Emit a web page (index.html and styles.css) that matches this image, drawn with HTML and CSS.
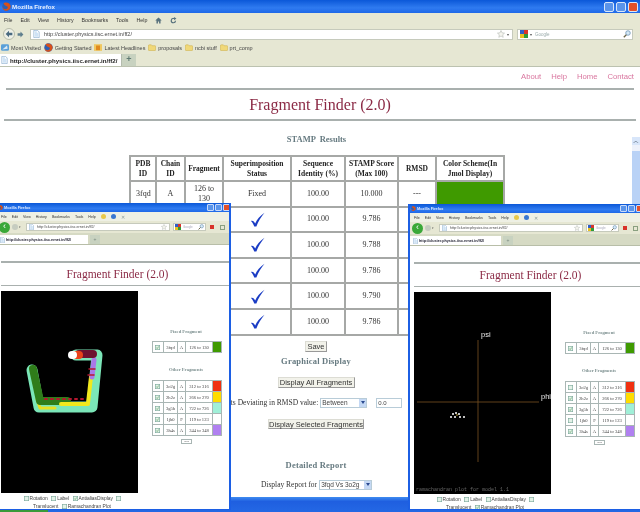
FILE: index.html
```html
<!DOCTYPE html>
<html lang="en">
<head>
<meta charset="utf-8">
<title>Fragment Finder (2.0)</title>
<link rel="stylesheet" href="styles.css">
</head>
<body>
<svg class="defs" width="0" height="0" aria-hidden="true">
  <defs>
    <symbol id="fox" viewBox="0 0 12 12">
      <circle cx="6" cy="6" r="5.6" fill="#2f5fb0"/>
      <path d="M2 1.5C4 .2 9 .2 11 4c1.300 3.500-.8 7.500-5 7.800C2.500 12 .2 9 .4 6c.6 2 2 3.500 4 3.500 2.500 0 3.500-1.500 3.300-3C6.500 5.500 4.500 5 3.500 4 3 3 2.600 2.400 2 1.500z" fill="#d8501a"/>
    </symbol>
    <symbol id="page" viewBox="0 0 10 12">
      <path d="M1 .5h5.500L9 3v8.500H1z" fill="#fff" stroke="#7fa6cc"/>
      <path d="M2.500 2h3v2h2v6h-5z" fill="#cfe3f5"/>
    </symbol>
    <symbol id="folder" viewBox="0 0 12 10">
      <path d="M.5 2.500Q.5 1 2 1h3l1 1.300h4.500Q11.500 2.300 11.500 3.500v5Q11.500 9.500 10.500 9.500h-9Q.5 9.500 .5 8.500z" fill="#f0d878" stroke="#c9a93e" stroke-width=".7"/>
    </symbol>
    <symbol id="gmark" viewBox="0 0 12 12">
      <rect x="0" y="0" width="6" height="6" fill="#2f5fc8"/>
      <rect x="6" y="0" width="6" height="6" fill="#d8352a"/>
      <rect x="0" y="6" width="6" height="6" fill="#e8c020"/>
      <rect x="6" y="6" width="6" height="6" fill="#2f9a3a"/>
    </symbol>
    <symbol id="star" viewBox="0 0 12 12">
      <path d="M6 .8l1.600 3.500 3.700.4-2.800 2.500.8 3.800L6 9l-3.300 2 .8-3.800L.7 4.700l3.700-.4z" fill="#f6f6f0" stroke="#b4b8b4" stroke-width=".9"/>
    </symbol>
    <symbol id="lens" viewBox="0 0 12 12">
      <circle cx="7.500" cy="4.500" r="3.400" fill="#d5e8f5" stroke="#6d94b5" stroke-width="1.200"/>
      <path d="M5 7L1.200 10.800" stroke="#6b6548" stroke-width="2"/>
    </symbol>
    <symbol id="home" viewBox="0 0 12 12">
      <path d="M6 1L.5 6H2.500v5h2.500V7.500h2V11h2.500V6h2z" fill="#56707c"/>
    </symbol>
    <symbol id="reload" viewBox="0 0 12 12">
      <path d="M9.500 6.500A3.700 3.700 0 1 1 6 2.500h1.500" fill="none" stroke="#56707c" stroke-width="2"/>
      <path d="M7 0l4 2.700L7 5.400z" fill="#56707c"/>
    </symbol>
    <symbol id="check" viewBox="0 0 16 16">
      <path d="M1 9.500C3 8.800 4.500 10 5.500 12.300 7.500 8 10.500 4 15.500 .8 11.800 5.500 8.800 10 6.800 15.500H4.500C3.800 13 2.500 10.800 1 9.500z" fill="#1a3cc4"/>
    </symbol>
    <symbol id="box" viewBox="0 0 8 8">
      <rect x=".5" y=".5" width="7" height="7" fill="#e4f2e8" stroke="#7aa89a"/>
    </symbol>
    <symbol id="tick" viewBox="0 0 8 8">
      <rect x=".5" y=".5" width="7" height="7" fill="#e4f2e8" stroke="#7aa89a"/>
      <path d="M2 4l1.500 1.700L6 2.300" fill="none" stroke="#4f9a58"/>
    </symbol>
  </defs>
</svg>

<div class="desktop">
  <div class="taskbar"><span class="start"></span></div>

  <section class="win win-main">
    <header class="titlebar">
      <svg class="tb-fox"><use href="#fox"/></svg>
      <span class="tb-text">Mozilla Firefox</span>
      <span class="tb-btns"><i class="btn-blue"></i><i class="btn-blue"></i><i class="btn-red"></i></span>
    </header>
    <nav class="menubar">
      <span>File</span><span>Edit</span><span>View</span><span>History</span><span>Bookmarks</span><span>Tools</span><span>Help</span>
      <svg class="ico-home"><use href="#home"/></svg><svg class="ico-home"><use href="#reload"/></svg>
    </nav>
    <div class="navbar">
      <span class="back"><svg viewBox="0 0 12 12"><path d="M1 6l5-5v3h5v4H6v3z" fill="#4a6a80"/></svg></span>
      <svg class="fwd" viewBox="0 0 12 12"><path d="M11 6L6 1v3H1v4h5v3z" fill="#5f7f8e"/></svg>
      <div class="url">
        <svg class="page"><use href="#page"/></svg>
        <span class="url-text">http://cluster.physics.iisc.ernet.in/ff2/</span>
        <svg class="url-star"><use href="#star"/></svg><span class="caret">▾</span>
      </div>
      <div class="search">
        <svg class="gmark"><use href="#gmark"/></svg><span class="caret">▾</span>
        <span class="search-text">Google</span>
        <svg class="lens"><use href="#lens"/></svg>
      </div>
    </div>
    <div class="bookmarks">
      <span class="bm"><svg class="bm-ico" viewBox="0 0 12 10"><rect width="12" height="10" rx="2" fill="#5aa0d8"/><path d="M2 8l7-6 1 5z" fill="#dbe9f4"/></svg>Most Visited</span>
      <span class="bm"><svg class="bm-fox"><use href="#fox"/></svg>Getting Started</span>
      <span class="bm"><svg class="bm-ico" viewBox="0 0 12 10"><rect width="12" height="10" fill="#f0c860"/><rect x="3" y="2" width="6" height="7" fill="#e08a20"/></svg>Latest Headlines</span>
      <span class="bm"><svg class="bm-ico"><use href="#folder"/></svg>proposals</span>
      <span class="bm"><svg class="bm-ico"><use href="#folder"/></svg>ncbi stuff</span>
      <span class="bm"><svg class="bm-ico"><use href="#folder"/></svg>prt_comp</span>
    </div>
    <div class="tabs">
      <div class="tab"><svg class="page"><use href="#page"/></svg><b>http://cluster.physics.iisc.ernet.in/ff2/</b></div>
      <div class="newtab">+</div>
    </div>

    <main class="page-body">
      <div class="links"><a>About</a><a>Help</a><a>Home</a><a>Contact</a></div>
      <hr class="rule rule-a">
      <h1 class="title">Fragment Finder (2.0)</h1>
      <hr class="rule rule-b">
      <h2 class="stamp">STAMP &nbsp;Results</h2>
      <table class="results">
        <tr>
          <th>PDB ID</th><th>Chain ID</th><th>Fragment</th><th>Superimposition Status</th><th>Sequence Identity (%)</th><th>STAMP Score (Max 100)</th><th>RMSD</th><th>Color Scheme(In Jmol Display)</th>
        </tr>
        <tr><td>3fqd</td><td>A</td><td>126 to 130</td><td>Fixed</td><td>100.00</td><td>10.000</td><td>---</td><td class="c-green"></td></tr>
        <tr><td>3o2g</td><td>A</td><td>312 to 316</td><td><svg class="check"><use href="#check"/></svg></td><td>100.00</td><td>9.786</td><td>0.10</td><td class="c-red"></td></tr>
        <tr><td>2h2z</td><td>A</td><td>266 to 270</td><td><svg class="check"><use href="#check"/></svg></td><td>100.00</td><td>9.788</td><td>0.10</td><td class="c-yellow"></td></tr>
        <tr><td>3g5h</td><td>A</td><td>722 to 726</td><td><svg class="check"><use href="#check"/></svg></td><td>100.00</td><td>9.786</td><td>0.10</td><td class="c-aqua"></td></tr>
        <tr><td>1jb0</td><td>F</td><td>119 to 123</td><td><svg class="check"><use href="#check"/></svg></td><td>100.00</td><td>9.790</td><td>0.10</td><td></td></tr>
        <tr><td>3h4s</td><td>A</td><td>344 to 348</td><td><svg class="check"><use href="#check"/></svg></td><td>100.00</td><td>9.786</td><td>0.10</td><td class="c-violet"></td></tr>
      </table>
      <div class="form">
        <button class="fbtn btn-save">Save</button>
        <h3 class="sub sub-graph">Graphical Display</h3>
        <button class="fbtn btn-all">Display All Fragments</button>
        <div class="rmsd-row">
          <span>Display Fragments Deviating in RMSD value:</span>
          <span class="sel sel-between">Between<i class="sel-arrow"></i></span>
          <span class="inp">0.0</span>
          <span class="and">and</span>
          <span class="inp inp-end"></span>
        </div>
        <button class="fbtn btn-sel">Display Selected Fragments</button>
        <h3 class="sub sub-report">Detailed Report</h3>
        <div class="report-row">
          <span>Display Report for</span>
          <span class="sel sel-report">3fqd Vs 3o2g<i class="sel-arrow"></i></span>
        </div>
      </div>
    </main>
    <div class="scrollbar"><span class="sb-up">︿</span><span class="sb-thumb"></span></div>
  </section>

  <section class="win win-mini win-left">
    <header class="m-title">
      <svg class="m-fox"><use href="#fox"/></svg><span>Mozilla Firefox</span>
      <span class="m-btns"><i class="btn-blue"></i><i class="btn-blue"></i><i class="btn-red"></i></span>
    </header>
    <nav class="m-menu">
      <span>File</span><span>Edit</span><span>View</span><span>History</span><span>Bookmarks</span><span>Tools</span><span>Help</span>
      <i class="dot dot-y"></i><i class="dot dot-b"></i><i class="m-x">✕</i>
    </nav>
    <div class="m-nav">
      <span class="m-back">‹</span><span class="m-fwd"></span><span class="caret">▾</span>
      <div class="m-url"><svg class="m-page"><use href="#page"/></svg><span>http://cluster.physics.iisc.ernet.in/ff2/</span><svg class="m-star"><use href="#star"/></svg></div>
      <div class="m-search"><svg class="m-g"><use href="#gmark"/></svg><span>Google</span><svg class="m-lens"><use href="#lens"/></svg></div>
      <i class="m-red"></i><i class="m-sq"></i>
    </div>
    <div class="m-tabs"><div class="m-tab"><svg class="m-page"><use href="#page"/></svg><b>http://cluster.physics.iisc.ernet.in/ff2/</b></div><div class="m-new">+</div></div>
    <div class="m-body">
      <hr class="m-rule">
      <h2 class="m-h">Fragment Finder (2.0)</h2>
      <hr class="m-rule">
      <div class="m-main">
        <div class="m-left">
          <svg class="viewer" viewBox="0 0 137 202">
            <rect width="137" height="202" fill="#000"/>
            <g fill="none" stroke-linecap="round" stroke-linejoin="round">
              <path d="M31 79L38 116H91L96 64H75" stroke="#7be6b8" stroke-width="11"/>
              <path d="M36 108L39 117H54" stroke="#e8e020" stroke-width="3"/>
              <path d="M32 78L39 110H66" stroke="#2f7d1a" stroke-width="8"/>
              <path d="M60 113H87" stroke="#f2e81c" stroke-width="4"/>
              <path d="M44 108H84" stroke="#b5172f" stroke-width="2" stroke-dasharray="2 4"/>
              <path d="M87 112L90 86" stroke="#f2e81c" stroke-width="4"/>
              <path d="M91 86L93 69" stroke="#a979e8" stroke-width="5"/>
              <path d="M87 84L93 84M88 78L94 78" stroke="#b5172f" stroke-width="1.500"/>
              <path d="M78 63H92" stroke="#6d1230" stroke-width="8"/>
              <path d="M74 64H78" stroke="#e8431a" stroke-width="8"/>
              <path d="M71 64H72" stroke="#fff" stroke-width="8"/>
            </g>
          </svg>
          <div class="opts">
            <label><svg class="cb"><use href="#box"/></svg>Rotation</label>
            <label><svg class="cb"><use href="#box"/></svg>Label</label>
            <label><svg class="cb"><use href="#tick"/></svg>AntialiasDisplay</label>
            <label><svg class="cb"><use href="#box"/></svg>Translucent</label>
            <label><svg class="cb"><use href="#box"/></svg>Ramachandran Plot</label>
          </div>
        </div>
        <aside class="m-side">
          <div class="m-cap cap-fixed">Fixed Fragment</div>
          <table class="frag">
            <tr><td><svg class="cb"><use href="#tick"/></svg></td><td>3fqd</td><td>A</td><td>126 to 130</td><td class="c-green"></td></tr>
          </table>
          <div class="m-cap cap-other">Other Fragments</div>
          <table class="frag">
            <tr><td><svg class="cb"><use href="#tick"/></svg></td><td>3o2g</td><td>A</td><td>312 to 316</td><td class="c-red"></td></tr>
            <tr><td><svg class="cb"><use href="#tick"/></svg></td><td>2h2z</td><td>A</td><td>266 to 270</td><td class="c-yellow"></td></tr>
            <tr><td><svg class="cb"><use href="#tick"/></svg></td><td>3g5h</td><td>A</td><td>722 to 726</td><td class="c-aqua"></td></tr>
            <tr><td><svg class="cb"><use href="#tick"/></svg></td><td>1jb0</td><td>F</td><td>119 to 123</td><td></td></tr>
            <tr><td><svg class="cb"><use href="#tick"/></svg></td><td>3h4s</td><td>A</td><td>344 to 348</td><td class="c-violet"></td></tr>
          </table>
          <span class="m-back-btn">Back</span>
        </aside>
      </div>
    </div>
  </section>

  <section class="win win-mini win-right">
    <header class="m-title">
      <svg class="m-fox"><use href="#fox"/></svg><span>Mozilla Firefox</span>
      <span class="m-btns"><i class="btn-blue"></i><i class="btn-blue"></i><i class="btn-red"></i></span>
    </header>
    <nav class="m-menu">
      <span>File</span><span>Edit</span><span>View</span><span>History</span><span>Bookmarks</span><span>Tools</span><span>Help</span>
      <i class="dot dot-y"></i><i class="dot dot-b"></i><i class="m-x">✕</i>
    </nav>
    <div class="m-nav">
      <span class="m-back">‹</span><span class="m-fwd"></span><span class="caret">▾</span>
      <div class="m-url"><svg class="m-page"><use href="#page"/></svg><span>http://cluster.physics.iisc.ernet.in/ff2/</span><svg class="m-star"><use href="#star"/></svg></div>
      <div class="m-search"><svg class="m-g"><use href="#gmark"/></svg><span>Google</span><svg class="m-lens"><use href="#lens"/></svg></div>
      <i class="m-red"></i><i class="m-sq"></i>
    </div>
    <div class="m-tabs"><div class="m-tab"><svg class="m-page"><use href="#page"/></svg><b>http://cluster.physics.iisc.ernet.in/ff2/</b></div><div class="m-new">+</div></div>
    <div class="m-body">
      <hr class="m-rule">
      <h2 class="m-h">Fragment Finder (2.0)</h2>
      <hr class="m-rule">
      <div class="m-main">
        <div class="m-left">
          <svg class="viewer" viewBox="0 0 137 202">
            <rect width="137" height="202" fill="#000"/>
            <path d="M64 48V170M3 110H125" stroke="#7a5222" stroke-width=".8" fill="none"/>
            <text class="plot-label" x="67" y="45">psi</text>
            <text class="plot-label" x="127" y="107">phi</text>
            <g fill="#fff"><circle cx="39" cy="122" r="1"/><circle cx="42" cy="121" r="1"/><circle cx="45" cy="122" r="1"/><circle cx="41" cy="125" r="1"/><circle cx="46" cy="125" r="1"/><circle cx="50" cy="125" r="1"/><circle cx="37" cy="125" r="1"/></g>
            <circle cx="43" cy="123" r=".8" fill="#e0c040"/>
            <text class="plot-note" x="2" y="199">ramachandran plot for model 1.1</text>
          </svg>
          <div class="opts">
            <label><svg class="cb"><use href="#box"/></svg>Rotation</label>
            <label><svg class="cb"><use href="#box"/></svg>Label</label>
            <label><svg class="cb"><use href="#box"/></svg>AntialiasDisplay</label>
            <label><svg class="cb"><use href="#box"/></svg>Translucent</label>
            <label><svg class="cb"><use href="#tick"/></svg>Ramachandran Plot</label>
          </div>
        </div>
        <aside class="m-side">
          <div class="m-cap cap-fixed">Fixed Fragment</div>
          <table class="frag">
            <tr><td><svg class="cb"><use href="#tick"/></svg></td><td>3fqd</td><td>A</td><td>126 to 130</td><td class="c-green"></td></tr>
          </table>
          <div class="m-cap cap-other">Other Fragments</div>
          <table class="frag">
            <tr><td><svg class="cb"><use href="#box"/></svg></td><td>3o2g</td><td>A</td><td>312 to 316</td><td class="c-red"></td></tr>
            <tr><td><svg class="cb"><use href="#tick"/></svg></td><td>2h2z</td><td>A</td><td>266 to 270</td><td class="c-yellow"></td></tr>
            <tr><td><svg class="cb"><use href="#tick"/></svg></td><td>3g5h</td><td>A</td><td>722 to 726</td><td class="c-aqua"></td></tr>
            <tr><td><svg class="cb"><use href="#box"/></svg></td><td>1jb0</td><td>F</td><td>119 to 123</td><td></td></tr>
            <tr><td><svg class="cb"><use href="#tick"/></svg></td><td>3h4s</td><td>A</td><td>344 to 348</td><td class="c-violet"></td></tr>
          </table>
          <span class="m-back-btn">Back</span>
        </aside>
      </div>
    </div>
  </section>
</div>
</body>
</html>
```

FILE: styles.css
```css
* { box-sizing: border-box; }
html, body { margin: 0; padding: 0; background: #fff; }
body { width: 640px; height: 512px; overflow: hidden; font-family: "Liberation Sans", Arial, sans-serif; }
.defs { position: absolute; }
.desktop { position: relative; width: 640px; height: 512px; overflow: hidden; filter: blur(.45px); }

/* desktop pieces */
.taskbar { position: absolute; left: 0; right: 0; bottom: 0; height: 15px; background: linear-gradient(#3f8cf0, #1f5fe0 30%, #2468e4); }
.start { position: absolute; left: 0; top: 0; bottom: 0; width: 48px; background: #3a9a3a; }
.win { position: absolute; background: #fff; }
.win-main { left: 0; top: 0; width: 640px; height: 497px; display: flex; flex-direction: column; overflow: hidden; }

/* main chrome */
.titlebar { height: 13px; flex: none; display: flex; align-items: center; background: linear-gradient(#0b58d8, #2f7bf0 60%, #1e68e8); color: #e8f0ff; font-size: 6.200px; font-weight: 700; padding: 0 2px 0 2px; }
.tb-fox { width: 9px; height: 9px; margin-right: 1px; }
.tb-btns { margin-left: auto; display: flex; gap: 2px; }
.tb-btns i { display: block; width: 10px; height: 10px; border-radius: 2px; border: 1px solid #d8e6fa; }
.btn-blue { background: #5a94ea; }
.btn-red { background: #e2502a; }

.menubar { height: 14px; flex: none; display: flex; align-items: center; background: #e6e7d3; font-size: 5.300px; color: #333; padding-left: 4px; gap: 8px; }
.ico-home { width: 7px; height: 7px; }
.navbar { height: 14px; flex: none; display: flex; align-items: center; background: #e6e7d3; padding: 0 4px 0 3px; }
.back { width: 12px; height: 12px; border-radius: 50%; background: #eef0e6; border: 1px solid #b8bcaa; display: flex; align-items: center; justify-content: center; margin-right: 2px; }
.back svg { width: 8px; height: 8px; }
.fwd { width: 7px; height: 7px; margin-right: 6px; }
.url { width: 483px; height: 11px; background: #fff; border: 1px solid #c6cabc; display: flex; align-items: center; padding: 0 3px 0 2px; margin-right: 4px; font-size: 5.500px; color: #444; }
.page { width: 7px; height: 8px; margin-right: 4px; flex: none; }
.url-star { width: 8px; height: 8px; margin-left: auto; }
.caret { font-size: 4px; color: #555; margin-left: 2px; }
.search { width: 116px; height: 11px; background: #fff; border: 1px solid #c6cabc; display: flex; align-items: center; padding: 0 1px 0 2px; font-size: 4.500px; color: #9aa; }
.gmark { width: 8px; height: 8px; }
.search-text { margin-left: 3px; }
.lens { width: 8px; height: 8px; margin-left: auto; }

.bookmarks { height: 13px; flex: none; display: flex; align-items: center; background: #e6e7d3; font-size: 5.500px; color: #444; padding-left: 1px; gap: 2.800px; }
.bm { display: flex; align-items: center; gap: 2px; white-space: nowrap; }
.bm-ico { width: 8px; height: 7px; }
.bm-fox { width: 9px; height: 9px; }

.tabs { height: 13px; flex: none; display: flex; align-items: flex-end; background: #e6e7d3; border-bottom: 1px solid #bcc2b0; }
.tab { width: 122px; height: 12px; background: #fff; display: flex; align-items: center; font-size: 6.100px; color: #222; padding-left: 1px; white-space: nowrap; border-right: 1px solid #b4bcae; overflow: hidden; }
.tab .page { margin-right: 2px; }
.newtab { width: 14px; height: 12px; background: #c8d2c0; color: #5f7a72; font-size: 9px; font-weight: 700; line-height: 11px; text-align: center; }

/* main page */
.page-body { flex: 1; min-height: 0; width: 632px; font-family: "Liberation Serif", "Times New Roman", serif; color: #333; position: relative; }
.links { height: 21px; display: flex; justify-content: flex-end; gap: 10px; padding: 5px 0 0 0; margin-right: -2px; font: 7.700px/10px "Liberation Sans", Arial, sans-serif; color: #d9769f; }
.rule { height: 2px; border: 0; background: #a9b0ae; margin: 0; }
.rule-a { margin-left: 6px; width: 628px; }
.rule-b { margin-left: 4px; width: 632px; }
.title { height: 29px; margin: 0; text-align: center; font-size: 16px; font-weight: 400; line-height: 30px; color: #8b2a45; padding-left: 8px; }
.stamp { margin: 12px 0 0 0; height: 22px; line-height: 12px; text-align: center; font-size: 8.500px; color: #667a80; padding-left: 1px; }
.results { margin: 0 0 0 129px; width: 374px; border-collapse: collapse; table-layout: fixed; font-size: 8px; text-align: center; color: #333; }
.results th, .results td { border: 2px solid #a6a8a6; padding: 0 5px; line-height: 10px; font-weight: 400; }
.results th { height: 25px; padding: 0; font-size: 7.500px; font-weight: 700; color: #222; }
.results td { height: 25.600px; }
.results th:nth-child(1) { width: 26px; }
.results th:nth-child(2) { width: 29px; }
.results th:nth-child(3) { width: 38px; }
.results th:nth-child(4) { width: 68px; }
.results th:nth-child(5) { width: 54px; }
.results th:nth-child(6) { width: 53px; }
.results th:nth-child(7) { width: 38px; }
.results th:nth-child(8) { width: 68px; }
.check { width: 15px; height: 15px; display: block; margin: 0 auto; }
.c-green { background: #3f9a00; }
.c-red { background: #f03010; }
.c-yellow { background: #ffdc00; }
.c-aqua { background: #a0f0d8; }
.c-violet { background: #b080f0; }

.form { display: flex; flex-direction: column; align-items: center; width: 632px; font-size: 7.500px; color: #333; white-space: nowrap; }
.fbtn { font: 7.500px/9px "Liberation Sans", Arial, sans-serif; color: #333; padding: 0; background: #f2f2ea; border: 1px solid #dcdcd4; border-bottom-color: #999; border-right-color: #999; display: block; }
.btn-save { width: 22px; height: 11px; margin-top: 5px; }
.btn-all { width: 77px; height: 11px; margin-top: 11px; }
.btn-sel { width: 96px; height: 10px; margin-top: 11px; }
.sub { margin: 0; font-size: 8.500px; color: #667a80; line-height: 10px; letter-spacing: .2px; }
.sub-graph { margin-top: 4px; }
.sub-report { margin-top: 31px; }
.rmsd-row { display: flex; align-items: center; justify-content: center; height: 10px; margin-top: 10px; gap: 2px; }
.sel { display: flex; align-items: center; justify-content: space-between; height: 10px; background: #fff; border: 1px solid #b8ccd8; font: 6.500px/8px "Liberation Sans", Arial, sans-serif; color: #444; padding-left: 1px; }
.sel-between { width: 47px; }
.sel-report { width: 53px; }
.sel-arrow { width: 7px; height: 8px; background: #c4d8f4; position: relative; }
.sel-arrow::after { content: ""; position: absolute; left: 1.500px; top: 2.500px; border: 2px solid transparent; border-top: 3px solid #2a4a90; }
.inp { width: 26px; height: 10px; margin-left: 7px; border: 1px solid #b8ccd8; font: 6px/8px "Liberation Sans", Arial, sans-serif; padding-left: 1px; color: #444; }
.and { margin-left: 8px; }
.inp-end { margin-left: 0; width: 28px; }
.report-row { display: flex; align-items: center; height: 10px; margin-top: 10px; gap: 2px; padding-left: 1px; }

.scrollbar { position: absolute; right: 0; top: 137px; width: 8px; height: 100px; background: #eef2fb; display: flex; flex-direction: column; }
.sb-up { height: 8px; font-size: 6px; line-height: 8px; color: #345; text-align: center; background: #d8e6fa; }
.sb-thumb { margin-top: 6px; flex: 1; background: #b9d2f6; }

/* small windows */
.win-mini { top: 203px; width: 236px; height: 307px; border: 2px solid #1c5fe4; border-top: 0; border-bottom: 1px solid #1c5fe4; display: flex; flex-direction: column; overflow: hidden; }
.win-left { left: -5px; }
.win-right { left: 408px; top: 204px; height: 306px; }
.m-title { height: 9px; flex: none; margin: 0 -2px; display: flex; align-items: center; background: linear-gradient(#0b58d8, #2f7bf0 60%, #1e68e8); color: #dde8ff; font-size: 3.800px; font-weight: 700; padding: 0 1px 0 3px; }
.m-fox { width: 5px; height: 5px; margin-right: 1px; }
.m-btns { margin-left: auto; display: flex; gap: 1px; }
.m-btns i { display: block; width: 7px; height: 7px; border-radius: 1px; border: 1px solid #c8dafa; }
.m-menu { height: 9px; flex: none; display: flex; align-items: center; background: #eef0e4; font-size: 3.600px; color: #333; padding-left: 4px; gap: 5px; }
.dot { width: 5px; height: 5px; border-radius: 50%; }
.dot-y { background: #e8c84a; }
.dot-b { background: #3a78d0; }
.m-x { font-size: 5px; font-style: normal; color: #8a9a9a; }
.m-nav { height: 12px; flex: none; display: flex; align-items: center; background: #e6e7d3; font-size: 3.600px; color: #444; padding-left: 2px; }
.m-back { width: 11px; height: 11px; border-radius: 50%; background: #3aa838; color: #fff; font-size: 9px; line-height: 9px; text-align: center; margin-right: 2px; flex: none; }
.m-fwd { width: 6px; height: 6px; background: #c6ccc0; border-radius: 50%; flex: none; }
.m-nav .caret { margin: 0 3px 0 1px; font-size: 3px; }
.m-url { width: 144px; height: 8px; background: #fff; border: 1px solid #c6cabc; display: flex; align-items: center; padding: 0 2px; margin-left: 2px; flex: none; white-space: nowrap; }
.m-page { width: 5px; height: 6px; margin-right: 3px; flex: none; }
.m-star { width: 6px; height: 6px; margin-left: auto; }
.m-search { width: 33px; height: 8px; margin-left: 3px; background: #fff; border: 1px solid #c6cabc; display: flex; align-items: center; padding: 0 1px; flex: none; color: #aab; font-size: 3px; gap: 2px; }
.m-g { width: 6px; height: 6px; }
.m-lens { width: 6px; height: 6px; margin-left: auto; }
.m-red { width: 4px; height: 4px; background: #d8322a; margin-left: 4px; flex: none; }
.m-sq { width: 5px; height: 5px; border: 1px solid #8aa080; margin-left: 6px; flex: none; }
.m-tabs { height: 12px; flex: none; display: flex; align-items: flex-end; background: #d6dac4; border-bottom: 1px solid #b8bea8; }
.m-tab { width: 91px; height: 9px; background: #fff; display: flex; align-items: center; font-size: 3.700px; color: #223; white-space: nowrap; padding-left: 3px; }
.m-tab .m-page { margin-right: 1px; }
.m-new { width: 10px; height: 9px; margin-left: 2px; background: #c8d2c0; color: #7a8a80; font-size: 5px; line-height: 9px; text-align: center; }
.m-body { flex: 1; min-height: 0; background: #fff; font-family: "Liberation Serif", "Times New Roman", serif; padding-top: 16px; }
.m-rule { height: 1.500px; border: 0; margin: 0 0 0 4px; background: #a9b0ae; }
.m-h { margin: 0; height: 22px; padding-left: 9px; text-align: center; font-size: 11.500px; line-height: 22px; font-weight: 400; color: #8b2a45; }
.m-main { display: flex; padding: 5px 0 0 4px; }
.m-left { width: 137px; flex: none; }
.viewer { display: block; width: 137px; height: 202px; }
.plot-label { font: 7.500px "Liberation Sans", Arial, sans-serif; fill: #e8e8e8; }
.plot-note { font: 5px "Liberation Mono", monospace; fill: #666; }
.opts { margin-top: 2px; padding: 0 4px 0 10px; text-align: center; font: 4.900px/7.500px "Liberation Sans", Arial, sans-serif; color: #444; }
.opts label { margin: 0 1px; }
.cb { width: 5px; height: 5px; margin-right: 1px; vertical-align: -1px; }
.m-side { flex: 1; display: flex; flex-direction: column; align-items: flex-start; padding: 38px 0 0 14px; }
.m-cap { width: 68px; text-align: center; font-size: 4.600px; font-weight: 700; color: #7d9090; line-height: 6px; }
.cap-fixed { margin-bottom: 6px; }
.cap-other { margin-top: 14px; margin-bottom: 7px; }
.frag { width: 69px; border-collapse: collapse; table-layout: fixed; font-size: 4.600px; color: #444; text-align: center; }
.frag td { height: 11px; padding: 0; border: 1px solid #a9b6b4; white-space: nowrap; }
.frag td:nth-child(1) { width: 11px; }
.frag td:nth-child(2) { width: 14px; }
.frag td:nth-child(3) { width: 8px; }
.frag td:nth-child(4) { width: 27px; }
.frag td:nth-child(5) { width: 9px; }
.m-back-btn { margin: 3px 0 0 29px; width: 11px; height: 5px; border: 1px solid #a9b6b4; font-size: 2.500px; line-height: 3px; text-align: center; color: #555; }
```
